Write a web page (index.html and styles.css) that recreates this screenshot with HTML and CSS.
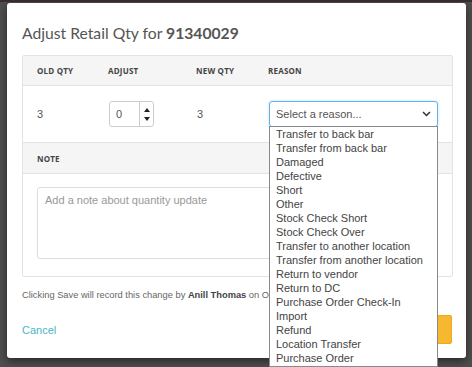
FILE: index.html
```html
<!DOCTYPE html>
<html lang="en">
<head>
  <meta charset="UTF-8" />
  <meta name="viewport" content="width=device-width, initial-scale=1.0"/>
  <title>Adjust Retail Qty</title>
  <link rel="stylesheet" href="styles.css">
</head>
<body>
  <div class="modal">
    <h2 class="title">Adjust Retail Qty for <strong>91340029</strong></h2>

    <div class="panel">
      <div class="row head">
        <div class="col c1">OLD QTY</div>
        <div class="col c2">ADJUST</div>
        <div class="col c3">NEW QTY</div>
        <div class="col c4">REASON</div>
      </div>
      <div class="row values">
        <div class="col c1">3</div>
        <div class="col c2">
          <div class="spin">
            <span class="spin-val">0</span>
            <span class="spin-btns">
              <span class="arrow up"></span>
              <span class="arrow down"></span>
            </span>
          </div>
        </div>
        <div class="col c3">3</div>
        <div class="col c4">
          <div class="select">
            <span>Select a reason...</span>
            <svg class="chev" width="9" height="6" viewBox="0 0 9 6"><path d="M1 1l3.5 3.5L8 1" fill="none" stroke="#333" stroke-width="1.5"/></svg>
            <ul class="options">
              <li>Transfer to back bar</li>
              <li>Transfer from back bar</li>
              <li>Damaged</li>
              <li>Defective</li>
              <li>Short</li>
              <li>Other</li>
              <li>Stock Check Short</li>
              <li>Stock Check Over</li>
              <li>Transfer to another location</li>
              <li>Transfer from another location</li>
              <li>Return to vendor</li>
              <li>Return to DC</li>
              <li>Purchase Order Check-In</li>
              <li>Import</li>
              <li>Refund</li>
              <li>Location Transfer</li>
              <li>Purchase Order</li>
            </ul>
          </div>
        </div>
      </div>
      <div class="row head note-head">
        <div class="col">NOTE</div>
      </div>
      <div class="note-body">
        <div class="textarea">Add a note about quantity update</div>
      </div>
    </div>

    <p class="info">Clicking Save will record this change by <b>Anill Thomas</b> on Oct 12, 2023.</p>

    <div class="actions">
      <a class="cancel">Cancel</a>
      <button class="save">Save</button>
    </div>
  </div>
</body>
</html>
```

FILE: styles.css
```css
body {
  margin: 0;
  background: #4e4e4e;
  font-family: "Liberation Sans", Arial, sans-serif;
  height: 367px;
  overflow: hidden;
  border-top: 2px solid #3a2c2c;
}
.modal {
  background: #fff;
  width: 459px;
  height: 355px;
  margin: 1px 0 0 7px;
  border-radius: 3px;
  padding: 0 13px 0 15px;
  box-sizing: border-box;
  box-shadow: 0 3px 8px rgba(0, 0, 0, 0.5);
}
.title {
  margin: 0;
  padding: 21px 0 0;
  height: 31px;
  font-family: Lato, sans-serif;
  font-weight: 400;
  font-size: 15.7px;
  color: #555;
}
.title strong {
  font-weight: 700;
  color: #555;
}
.panel {
  border: 1px solid #e3e3e3;
  border-radius: 2px;
}
.row {
  display: flex;
  align-items: center;
  padding-left: 14px;
}
.head {
  background: #f5f5f5;
  height: 29px;
  border-bottom: 1px solid #e3e3e3;
  font-family: "Open Sans", sans-serif;
  font-weight: 700;
  font-size: 8px;
  color: #444;
  letter-spacing: 0.2px;
}
.values {
  height: 56px;
  font-size: 11px;
  color: #555;
  border-bottom: 1px solid #e3e3e3;
}
.col.c1 { width: 71px; }
.col.c2 { width: 88px; }
.col.c3 { width: 72px; }
.values .col.c2 { padding-left: 1px; box-sizing: border-box; }
.values .col.c3 { padding-left: 1px; box-sizing: border-box; }
.values .col.c4 { padding-left: 1px; }
.note-head {
  height: 30px;
}
.spin {
  display: flex;
  width: 45px;
  height: 26px;
  border: 1px solid #ccc;
  border-radius: 3px;
  box-sizing: border-box;
}
.spin-val {
  flex: 1;
  padding-left: 6px;
  line-height: 24px;
}
.spin-btns {
  width: 13px;
  border-left: 1px solid #ccc;
  display: flex;
  flex-direction: column;
  justify-content: center;
  align-items: center;
  gap: 5px;
}
.arrow {
  width: 0;
  height: 0;
  border-left: 3.5px solid transparent;
  border-right: 3.5px solid transparent;
}
.arrow.up { border-bottom: 4px solid #222; }
.arrow.down { border-top: 4px solid #222; }
.select {
  position: relative;
  width: 169px;
  height: 26px;
  border: 1px solid #66afe9;
  border-radius: 3px;
  box-sizing: border-box;
  display: flex;
  align-items: center;
  justify-content: space-between;
  padding: 0 6px 0 6px;
  font-size: 11px;
  color: #555;
  box-shadow: 0 0 3px rgba(102, 175, 233, 0.4);
}
.options {
  position: absolute;
  top: 24px;
  left: -1px;
  width: 169px;
  margin: 0;
  padding: 0 0 1px;
  list-style: none;
  background: #fff;
  border: 1px solid #8a8a8a;
  box-sizing: border-box;
  font-size: 11px;
  color: #444;
  z-index: 2;
}
.options li {
  line-height: 14px;
  padding-left: 6px;
  white-space: nowrap;
}
.note-body {
  padding: 13px 14px 17px 14px;
}
.textarea {
  height: 72px;
  border: 1px solid #ddd;
  border-radius: 3px;
  padding: 6px 7px;
  box-sizing: border-box;
  font-size: 11px;
  color: #999;
}
.info {
  margin: 13px 0 0;
  font-size: 9.3px;
  color: #666;
}
.info b { color: #444; }
.actions {
  display: flex;
  justify-content: space-between;
  align-items: center;
  margin-top: 15px;
}
.cancel {
  font-size: 11px;
  color: #4ab5c6;
}
.save {
  width: 56px;
  height: 29px;
  background: #f5b82e;
  border: 1px solid #f0a81e;
  border-radius: 2px;
  color: #fff;
  font-size: 11px;
  font-family: "Liberation Sans", sans-serif;
  margin-right: 1px;
}
```
